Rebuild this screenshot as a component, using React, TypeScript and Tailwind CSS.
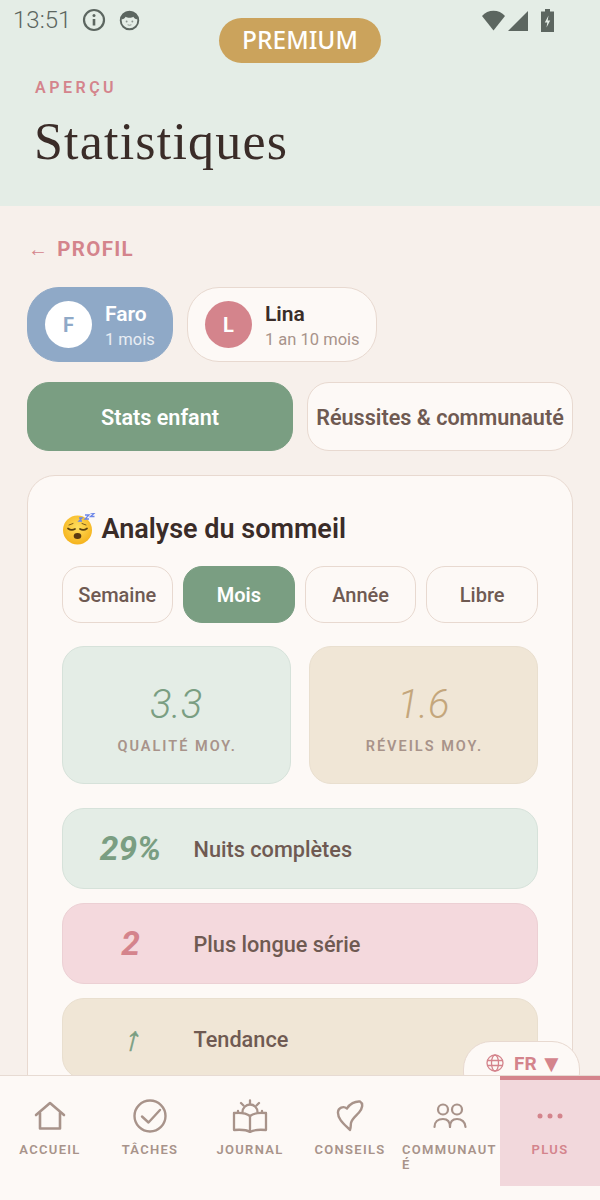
import React from "react";

const roboto = { fontFamily: "Roboto, 'Noto Sans', sans-serif" };

function Chip({ letter, name, age, active, w }: { letter: string; name: string; age: string; active?: boolean; w: string }) {
  return (
    <div className={`${w} h-[75px] rounded-[32px] border-[1.5px] flex items-center pl-[17px] gap-[13px] ${active ? "bg-[#8fa9c7] border-[#8fa9c7]" : "bg-[#fdf9f6] border-[#e8d9d0]"}`}>
      <div className={`w-[47px] h-[47px] rounded-full flex items-center justify-center text-[20px] font-bold ${active ? "bg-white text-[#8fa9c7]" : "bg-[#d4848c] text-white"}`}>{letter}</div>
      <div className="flex flex-col pt-[4px]">
        <span className={`text-[21px] leading-[26px] font-semibold ${active ? "text-white" : "text-[#3a2c28]"}`}>{name}</span>
        <span className={`text-[16.5px] leading-[25px] ${active ? "text-white/80" : "text-[#a8938a]"}`}>{age}</span>
      </div>
    </div>
  );
}

function Period({ label, active }: { label: string; active?: boolean }) {
  return (
    <div className={`flex-1 h-[57px] rounded-[19px] border-[1.5px] flex items-center justify-center text-[20px] font-medium ${active ? "bg-[#7a9e82] border-[#7a9e82] text-white font-semibold" : "bg-[#fdf9f6] border-[#e8d9d0] text-[#6f5a52]"}`}>{label}</div>
  );
}

function Stat({ value, label, box, color }: { value: string; label: string; box: string; color: string }) {
  return (
    <div className={`flex-1 h-[138px] rounded-[22px] border-[1.5px] flex flex-col items-center ${box}`}>
      <span className={`mt-[33px] text-[40px] leading-[50px] italic font-[350] ${color}`}>{value}</span>
      <span className="mt-[7px] pl-[2px] text-[14.5px] leading-[20px] font-semibold tracking-[2px] text-[#a8938a]">{label}</span>
    </div>
  );
}

function Row({ value, label, box, color, h, valueClass }: { value: string; label: string; box: string; color: string; h: string; valueClass?: string }) {
  return (
    <div className={`${h} shrink-0 rounded-[22px] border-[1.5px] flex items-center pl-[20px] gap-[15px] ${box}`}>
      <span className={`w-[96px] text-center text-[33.5px] leading-[40px] italic font-bold ${color}`}>
        <span className={`inline-block ${valueClass ?? ""}`}>{value}</span>
      </span>
      <span className="pt-[2px] text-[21.7px] leading-[28px] font-medium text-[#6f5a52]">{label}</span>
    </div>
  );
}

function NavItem({ label, active, children }: { label: string; active?: boolean; children: React.ReactNode }) {
  return (
    <div className={`w-[100px] h-[110px] flex flex-col items-center ${active ? "bg-[#f2d8dc] border-t-4 border-[#d4848c]" : "border-t-4 border-transparent"}`}>
      <div className="h-[52px] w-full flex items-center justify-center mt-[10px]">{children}</div>
      <span className={`max-w-[96px] break-all text-[13px] leading-[15px] font-semibold tracking-[1.3px] ${active ? "text-[#d4848c]" : "text-[#a8938a]"}`}>{label}</span>
    </div>
  );
}

function SleepEmoji() {
  return (
    <svg width="34" height="32" viewBox="0 0 34 32">
      <defs>
        <radialGradient id="f" cx="50%" cy="40%" r="60%">
          <stop offset="0%" stopColor="#ffdf5e" />
          <stop offset="100%" stopColor="#f5b21c" />
        </radialGradient>
      </defs>
      <circle cx="15.5" cy="17" r="14.5" fill="url(#f)" />
      <path d="M6 15.5q3.5 2.5 7 .5M18 16q3.500 2 7-.5" fill="none" stroke="#5a4010" strokeWidth="1.7" strokeLinecap="round" />
      <path d="M7 12l4-1.500M24 12l-4-1.500" fill="none" stroke="#7a5a18" strokeWidth="1" strokeLinecap="round" />
      <ellipse cx="15.500" cy="23" rx="3.800" ry="3" fill="#5a3a10" />
      <path d="M17 5h3l-3 3h3M23 2h4l-4 4h4M28.500 0h4l-4 3.500h4" fill="none" stroke="#6c86e8" strokeWidth="1.300" />
    </svg>
  );
}

export default function App() {
  return (
    <div className="relative w-[600px] h-[1200px] overflow-hidden flex flex-col bg-[#f7f0eb]" style={roboto}>
      {/* Header */}
      <div className="h-[206px] shrink-0 bg-[#e4ede6] relative">
        <div className="h-[40px] flex items-center pl-[13px] pr-[46px] text-[#5c6660]">
          <span className="text-[24px] leading-[44px] font-light">13:51</span>
          <svg className="ml-[11px]" width="24" height="24" viewBox="0 0 24 24" fill="none" stroke="#5c6660" strokeWidth="2.200">
            <circle cx="12" cy="12" r="10" />
            <path d="M12 11v6.500" strokeWidth="2.600" />
            <circle cx="12" cy="7.400" r="1.500" fill="#5c6660" stroke="none" />
          </svg>
          <svg className="ml-[13px]" width="21" height="21" viewBox="0 0 22 22">
            <circle cx="11" cy="11" r="9.200" fill="#e4ede6" stroke="#5c6660" strokeWidth="2" />
            <path d="M2.500 9.500C3 4 7 1.500 11 1.500s8 2.500 8.500 8c-2 .5-3.500-1-4.500-2.500-2 1.500-6 1.500-8 0-1 1.500-2.500 3-4.500 2.500z" fill="#5c6660" />
            <circle cx="8" cy="12" r="1" fill="#8d9690" />
            <circle cx="14" cy="12" r="1" fill="#8d9690" />
            <path d="M9 15.500q2 1 4 0" stroke="#8d9690" fill="none" />
          </svg>
          <div className="ml-auto flex items-center">
            <svg width="25" height="21" viewBox="0 0 24 21"><path d="M0.500 6C3.500 2.700 7.500 0.800 12 0.800S20.500 2.700 23.500 6L12 20.500z" fill="#5c6660" /></svg>
            <svg className="ml-[2px]" width="20" height="21" viewBox="0 0 20 21"><path d="M20 1v20H0z" fill="#5c6660" /></svg>
            <svg className="ml-[13px]" width="13" height="23" viewBox="0 0 13 23">
              <path d="M4 0h5v2.500h4V23H0V2.500h4z" fill="#5c6660" />
              <path d="M7.500 6.500L3.800 13.500h2.500l-.8 5 3.700-7H6.700z" fill="#e4ede6" />
            </svg>
          </div>
        </div>
        <div className="absolute left-[219px] top-[18px] w-[162px] h-[45px] rounded-full bg-[#cba35c] flex items-center justify-center text-white text-[24.500px] font-medium" style={{ fontFamily: "'Noto Sans', sans-serif" }}>PREMIUM</div>
        <div className="pl-[35px] mt-[38px] text-[16px] leading-[20px] font-semibold tracking-[3.500px] text-[#d4848c]">APERÇU</div>
        <div className="pl-[34px] mt-[11px] text-[52px] leading-[66px] tracking-[1.200px] text-[#3a2c28]" style={{ fontFamily: "'Liberation Serif', serif" }}>Statistiques</div>
      </div>

      {/* Main */}
      <div className="flex-1 min-h-0 relative overflow-hidden px-[27px]">
        <div className="mt-[29px] h-[28px] pl-[1px] flex items-center gap-[8px] text-[#d4848c] font-bold text-[20.500px] tracking-[1.300px]">
          <span className="text-[20px] font-normal">←</span>
          <span>PROFIL</span>
        </div>
        <div className="mt-[24px] flex gap-[14px]">
          <Chip letter="F" name="Faro" age="1 mois" active w="w-[146px]" />
          <Chip letter="L" name="Lina" age="1 an 10 mois" w="w-[190px]" />
        </div>
        <div className="mt-[20px] flex gap-[14px]">
          <div className="flex-1 h-[69px] pt-[3px] rounded-[22px] border-[1.5px] bg-[#7a9e82] border-[#7a9e82] flex items-center justify-center text-white text-[21.600px] font-semibold">Stats enfant</div>
          <div className="flex-1 h-[69px] pt-[3px] rounded-[22px] border-[1.5px] bg-[#fdf9f6] border-[#e8d9d0] flex items-center justify-center text-[#6f5a52] text-[21.600px] font-semibold whitespace-nowrap">Réussites &amp; communauté</div>
        </div>
        <div className="mt-[24px] h-[700px] rounded-t-[28px] border-[1.5px] border-[#e8d9d0] bg-[#fdf9f6] pl-[33.500px] pr-[34px] pt-[36px]">
          <div className="h-[34px] flex items-center gap-[6px] text-[27px] font-semibold text-[#3a2c28]">
            <SleepEmoji />
            <span>Analyse du sommeil</span>
          </div>
          <div className="mt-[20px] flex gap-[10px]">
            <Period label="Semaine" />
            <Period label="Mois" active />
            <Period label="Année" />
            <Period label="Libre" />
          </div>
          <div className="mt-[23px] flex gap-[18px]">
            <Stat value="3.3" label="QUALITÉ MOY." box="bg-[#e4ede6] border-[#d6e2da]" color="text-[#7a9e82]" />
            <Stat value="1.6" label="RÉVEILS MOY." box="bg-[#f0e6d6] border-[#e9dfcf]" color="text-[#c4a67c]" />
          </div>
          <div className="mt-[24px] flex flex-col gap-[14px]">
            <Row value="29%" label="Nuits complètes" box="bg-[#e4ede6] border-[#d6e2da]" color="text-[#7a9e82]" h="h-[81px]" />
            <Row value="2" label="Plus longue série" box="bg-[#f4d9dd] border-[#ecd0d4]" color="text-[#d4848c]" h="h-[81px]" />
            <Row value="↑" label="Tendance" box="bg-[#f0e6d6] border-[#e9dfcf]" color="text-[#7a9e82]" h="h-[81px]" valueClass="-skew-x-[14deg] translate-x-[3px] [-webkit-text-stroke:0.5px_#7a9e82]" />
          </div>
        </div>
        <div className="absolute left-[463px] top-[835px] w-[117px] h-[60px] rounded-[28px] border-[1.5px] border-[#e8d9d0] bg-[#fdf9f6] pt-[10px] pl-[22px] flex items-start gap-[10px] text-[#d4848c] text-[19px] font-bold">
          <svg className="mt-[2px] shrink-0" width="18" height="18" viewBox="0 0 18 18" fill="none" stroke="#d4848c" strokeWidth="1.300">
            <circle cx="9" cy="9" r="8" />
            <ellipse cx="9" cy="9" rx="3.500" ry="8" />
            <path d="M1 6.500h16M1 11.500h16" />
          </svg>
          <span className="leading-[24px] whitespace-nowrap flex gap-[3px]">
            <span>FR</span>
            <span className="text-[24px]">▼</span>
          </span>
        </div>
      </div>

      {/* Bottom nav */}
      <div className="h-[125px] shrink-0 bg-[#fdf9f6] border-t border-[#e7dbd3] flex items-start relative z-10">
        <NavItem label="ACCUEIL">
          <svg width="32" height="30" viewBox="0 0 32 30" fill="none" stroke="#a8938a" strokeWidth="2.600" strokeLinejoin="round" strokeLinecap="round">
            <path d="M2 14L16 2l14 12" />
            <path d="M6 12v15.500h20V12" />
          </svg>
        </NavItem>
        <NavItem label="TÂCHES">
          <svg width="34" height="34" viewBox="0 0 34 34" fill="none" stroke="#a8938a" strokeWidth="2.400" strokeLinecap="round" strokeLinejoin="round">
            <circle cx="17" cy="17" r="15.500" />
            <path d="M9 17.500l6.500 6L27 11" />
          </svg>
        </NavItem>
        <NavItem label="JOURNAL">
          <svg width="36" height="34" viewBox="0 0 36 34" fill="none" stroke="#a8938a" strokeWidth="2.300" strokeLinecap="round" strokeLinejoin="round">
            <path d="M18 1.500v3M9 4l2.500 2.500M27 4l-2.500 2.500" />
            <path d="M10.500 13a7.500 7.500 0 0 1 15 0" />
            <path d="M6 12v2M30 12v2" />
            <path d="M18 17c-3-2.500-10-3.500-16-3v17c6-.5 13 0 16 2 3-2 10-2.500 16-2V14c-6-.5-13 .5-16 3z" />
            <path d="M18 17v16" />
          </svg>
        </NavItem>
        <NavItem label="CONSEILS">
          <svg width="28" height="32" viewBox="0 0 28 32" fill="none" stroke="#a8938a" strokeWidth="2.400" strokeLinecap="round" strokeLinejoin="round">
            <path d="M14 30C8 24 1.500 19 2 12c.4-4 5-6.500 9-3.500C13.500 4 19 1 24 1.500c3.500 2 2.500 7-1 11-2.500 3-7 6-8 10.500-.4 2 0 5-1 7z" />
          </svg>
        </NavItem>
        <NavItem label="COMMUNAUTÉ">
          <svg width="34" height="26" viewBox="0 0 34 26" fill="none" stroke="#a8938a" strokeWidth="2.200" strokeLinecap="round">
            <circle cx="10" cy="6.500" r="5" />
            <circle cx="24" cy="6.500" r="5" />
            <path d="M1.500 24c0-5 3.500-8 8.500-8s7 3.500 7 8" />
            <path d="M17 24c0-5 2.500-8 7-8s8.500 3 8.500 8" />
          </svg>
        </NavItem>
        <NavItem label="PLUS" active>
          <svg width="26" height="6" viewBox="0 0 26 6" fill="#d4848c">
            <circle cx="3" cy="3" r="2.500" />
            <circle cx="13" cy="3" r="2.500" />
            <circle cx="23" cy="3" r="2.500" />
          </svg>
        </NavItem>
      </div>
    </div>
  );
}
